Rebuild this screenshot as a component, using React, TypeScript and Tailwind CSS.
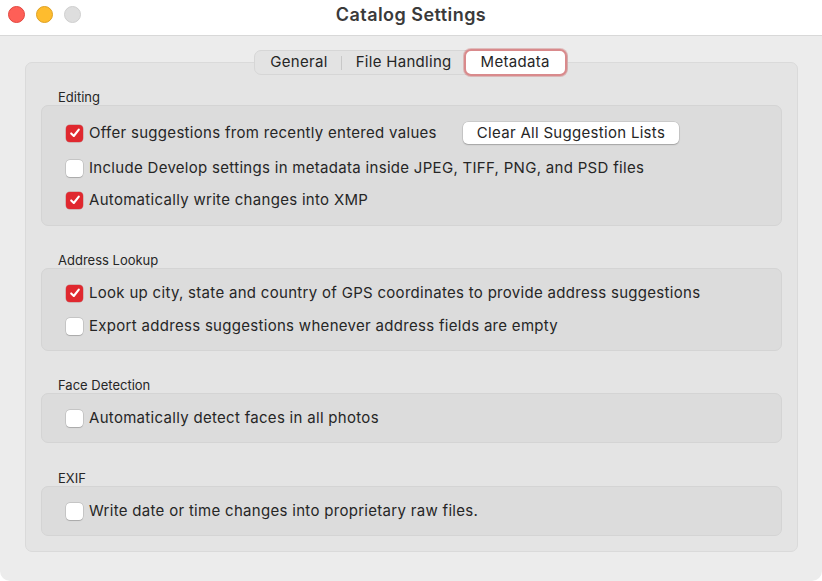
import React from "react";

function Check({ checked }: { checked: boolean }) {
  if (checked) {
    return (
      <div className="w-[17px] h-[17px] rounded-[4px] bg-[#e0282f] flex items-center justify-center shrink-0 shadow-[0_0_0_0.5px_rgba(160,20,20,0.4)]">
        <svg width="12" height="12" viewBox="0 0 12 12">
          <path d="M2.2 6.4 L4.8 9 L9.8 2.6" fill="none" stroke="white" strokeWidth="2.1" strokeLinecap="round" strokeLinejoin="round" />
        </svg>
      </div>
    );
  }
  return (
    <div className="w-[17px] h-[17px] rounded-[4px] bg-white shrink-0 shadow-[0_0_0_0.5px_rgba(0,0,0,0.18),0_0.5px_1px_rgba(0,0,0,0.15)]" />
  );
}

function Row({ checked, label, children, h = "h-[24px]" }: { checked: boolean; label: string; children?: React.ReactNode; h?: string }) {
  return (
    <div className={`flex items-center ${h}`}>
      <Check checked={checked} />
      <span className="ml-[6px] text-[15px] tracking-[0.3px] text-[#262626] whitespace-nowrap">{label}</span>
      {children}
    </div>
  );
}

function Section({ title, children, gap = "gap-[8px]", mt = "mt-[26px]", pb = "pb-[12px]" }: { title: string; children: React.ReactNode; gap?: string; mt?: string; pb?: string }) {
  return (
    <div className={mt}>
      <div className="h-[16px] pl-[17px] text-[13px] leading-[16px] text-[#262626]">{title}</div>
      <div className={`rounded-[7px] bg-[#dcdcdc] border border-[#d4d4d4] px-[24px] pt-[12px] ${pb} flex flex-col ${gap}`}>
        {children}
      </div>
    </div>
  );
}

export default function App() {
  return (
    <div className="w-[822px] h-[581px] bg-[#ececec] overflow-hidden rounded-b-[10px]" style={{ fontFamily: "Inter, 'Noto Sans', sans-serif" }}>
      <div className="h-[36px] bg-white border-b border-[#d8d8d8] relative flex items-center justify-center">
        <div className="absolute left-[8px] top-[6px] flex gap-[11px]">
          <div className="w-[17px] h-[17px] rounded-full bg-[#fe5f57] border border-[#e2463f]" />
          <div className="w-[17px] h-[17px] rounded-full bg-[#febc2e] border border-[#dea123]" />
          <div className="w-[17px] h-[17px] rounded-full bg-[#dedede] border border-[#cfcfcf]" />
        </div>
        <div className="text-[18px] font-semibold tracking-[0.45px] text-[#3a3a3a] -mt-[6px]">Catalog Settings</div>
      </div>
      <div className="px-[25px] pt-[14px] flex flex-col">
        <div className="relative z-10 self-center flex items-center h-[25px] rounded-[7px] bg-[#e3e3e3] border border-[#d6d6d6] text-[15px] tracking-[0.3px] text-[#262626]">
          <div className="pl-[15px] pr-[13px]">General</div>
          <div className="w-px h-[14px] bg-[#c8c8c8]" />
          <div className="pl-[14px] pr-[12px]">File Handling</div>
          <div className="h-[27px] -my-[1px] px-[15px] flex items-center bg-white rounded-[7px] border-[2.5px] border-[#d98a8c] shadow-[0_0_0_1px_rgba(200,100,100,0.35)]">Metadata</div>
        </div>
        <div className="-mt-[13px] w-[773px] rounded-[7px] bg-[#e4e4e4] border border-[#dadada] px-[15px] pt-[26px] pb-[15px]">
          <Section title="Editing" mt="mt-0" pb="pb-[13px]">
            <Row checked label="Offer suggestions from recently entered values" h="h-[30px]">
              <button className="ml-[26px] h-[22px] px-[14px] rounded-[5px] bg-white text-[15px] tracking-[0.3px] text-[#262626] shadow-[0_0_0_0.5px_rgba(0,0,0,0.15),0_1px_1.5px_rgba(0,0,0,0.2)]">
                Clear All Suggestion Lists
              </button>
            </Row>
            <Row checked={false} label="Include Develop settings in metadata inside JPEG, TIFF, PNG, and PSD files" />
            <Row checked label="Automatically write changes into XMP" />
          </Section>
          <Section title="Address Lookup" gap="gap-[9px]">
            <Row checked label="Look up city, state and country of GPS coordinates to provide address suggestions" />
            <Row checked={false} label="Export address suggestions whenever address fields are empty" />
          </Section>
          <Section title="Face Detection">
            <Row checked={false} label="Automatically detect faces in all photos" />
          </Section>
          <Section title="EXIF" mt="mt-[27px]">
            <Row checked={false} label="Write date or time changes into proprietary raw files." />
          </Section>
        </div>
      </div>
    </div>
  );
}
